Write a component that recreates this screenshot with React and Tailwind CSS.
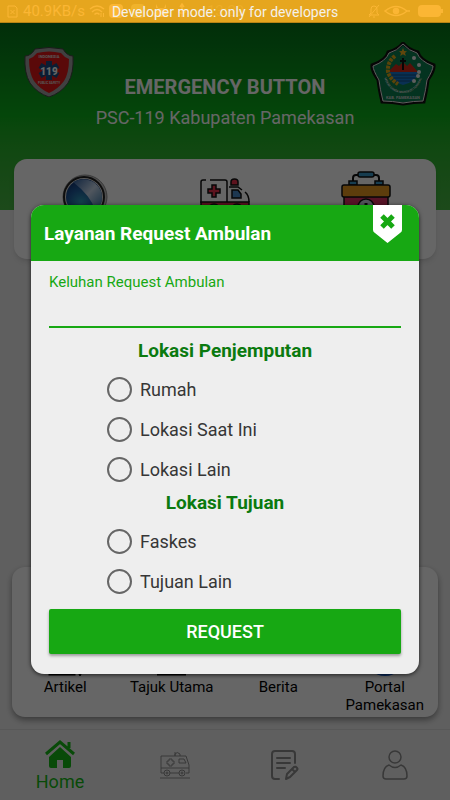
const ShieldLogo = () => (
  <svg viewBox="0 0 50 50" className="w-[50px] h-[50px]">
    <path
      d="M1 9Q7 9 11 2Q25 -1 39 2Q43 9 49 9Q50 26 44 36Q37 46 25 50Q13 46 6 36Q0 26 1 9Z"
      fill="#a0a0a0"
      stroke="#444"
      strokeWidth="1"
    />
    <path
      d="M5 12Q10 10 13 6Q25 3 37 6Q40 10 45 12Q45 26 40 34Q34 42 25 46Q16 42 10 34Q5 26 5 12Z"
      fill="#e01818"
    />
    <g stroke="#1d4a80" strokeWidth="6">
      <path d="M25 14V33M16 18.500L34 28.500M34 18.500L16 28.500" />
    </g>
    <text x="25" y="28" textAnchor="middle" fontSize="10" fontWeight="900" fill="#fff">119</text>
    <text x="25" y="11" textAnchor="middle" fontSize="4" fontWeight="700" fill="#ddd">INDONESIA</text>
    <text x="25" y="37" textAnchor="middle" fontSize="3" fontWeight="700" fill="#ddd">PUBLIC SAFETY</text>
  </svg>
);

const CityEmblem = () => (
  <svg viewBox="0 0 66 64" className="w-[66px] h-16">
    <path
      d="M33 1Q39 8 48 10Q50 18 64 23Q65 28 58 38Q57 47 54 60Q44 60 33 62Q22 60 12 60Q9 47 8 38Q1 28 2 23Q16 18 18 10Q27 8 33 1Z"
      fill="#0c8050"
      stroke="#111"
      strokeWidth="3"
    />
    <path
      d="M33 2Q39 9 47 11Q50 19 63 24Q63 28 57 38Q56 47 53 59Q44 59 33 61Q22 59 13 59Q10 47 9 38Q3 28 3 24Q16 19 19 11Q27 9 33 2Z"
      fill="none"
      stroke="#eee"
      strokeWidth="1"
    />
    <path d="M33 6L34.200 9L37 9.200L35 11L35.800 14L33 12.300L30.200 14L31 11L29 9.200L31.800 9Z" fill="#f0b020" />
    <path d="M18 30L26 22L29 24L33 20L37 24L40 21L48 30Z" fill="#d82a18" />
    <path d="M19 30H48Q46 40 33 43Q21 40 19 30Z" fill="#1878d0" />
    <path d="M20 33H47M22 36H45M25 39H41" stroke="#104a80" strokeWidth="1" />
    <path d="M33 16V28M30 19H36" stroke="#111" strokeWidth="2" />
    <path d="M25 14Q17 20 18 30Q20 37 28 42" fill="none" stroke="#e0a818" strokeWidth="4" strokeDasharray="3 1" />
    <g fill="#eee">
      <circle cx="44" cy="16" r="2" />
      <circle cx="49" cy="23" r="2" />
      <circle cx="49" cy="30" r="2" />
      <circle cx="48" cy="34" r="2" />
      <circle cx="44" cy="39" r="2" />
    </g>
    <path id="motto" d="M12 27Q16 51 33 51Q50 51 54 27" fill="none" />
    <text fontSize="3" fontWeight="700" fill="#ddd">
      <textPath href="#motto" startOffset="50%" textAnchor="middle">
        MEKAR GANDA MANGESTI TUNGGAL
      </textPath>
    </text>
    <text x="33" y="57" textAnchor="middle" fontSize="4" fontWeight="700" fill="#ccc">KAB. PAMEKASAN</text>
  </svg>
);

const Magnifier = () => (
  <svg viewBox="0 0 50 50" className="w-[50px] h-[50px]">
    <defs>
      <radialGradient id="lens" cx="42%" cy="65%" r="60%">
        <stop offset="0" stopColor="#2f9db8" />
        <stop offset="0.600" stopColor="#1e5a9c" />
        <stop offset="1" stopColor="#143878" />
      </radialGradient>
      <linearGradient id="shine" x1="0" y1="0" x2="1" y2="1">
        <stop offset="0" stopColor="#2c5c9c" />
        <stop offset="0.500" stopColor="#c8d8ec" />
        <stop offset="1" stopColor="#3070a0" />
      </linearGradient>
    </defs>
    <circle cx="26" cy="26" r="22" fill="#c0c0c0" stroke="#909090" strokeWidth="1" />
    <circle cx="25" cy="26" r="20" fill="#ddd" stroke="#222" strokeWidth="2" />
    <circle cx="25" cy="26" r="18" fill="url(#lens)" />
    <path d="M14 11Q25 5 36 12Q44 19 43 29Q42 35 36 39Q32 25 14 11Z" fill="url(#shine)" />
  </svg>
);

const Ambulance = () => (
  <svg viewBox="0 0 50 44" className="w-[50px] h-11" fill="none" stroke="#111" strokeWidth="1.500">
    <path d="M1 26V5Q1 3 3 3H6M10 3H25Q27 3 27 5V26" />
    <path d="M29 10H38L42 13M45 15Q49 18 49 25" />
    <path d="M1 25H49V39H1Z" fill="#d82c48" />
    <path d="M12 8H16V12H20V16H16V20H12V16H8V12H12Z" fill="#e8304c" />
    <path d="M32 13H38L41 17V21H32Z" fill="#4a8ac8" />
    <path d="M31 8V5Q31 2 34.500 2Q38 2 38 5V8Z" fill="#e8304c" />
    <circle cx="14" cy="33" r="6" fill="#555" />
    <circle cx="37" cy="33" r="6" fill="#555" />
  </svg>
);

const MedicalKit = () => (
  <svg viewBox="0 0 50 50" className="w-[50px] h-[50px]" stroke="#111" strokeWidth="1.500">
    <path d="M12 12V7Q12 4 15 4H35Q38 4 38 7V12" fill="none" strokeWidth="2" />
    <rect x="17" y="1" width="16" height="5" rx="2" fill="#3a9ac8" />
    <rect x="8" y="10" width="8" height="4" fill="#3a9ac8" />
    <rect x="34" y="10" width="8" height="4" fill="#3a9ac8" />
    <path d="M3 25H47V48H3Z" fill="#d83060" />
    <rect x="1" y="14" width="48" height="12" rx="2" fill="#e89a20" />
    <circle cx="25" cy="36" r="8" fill="#c8d0e0" />
    <path d="M25 32V40M21 36H29" strokeWidth="3" />
  </svg>
);

const services = [
  { name: "Pencarian", Icon: Magnifier },
  { name: "Ambulan", Icon: Ambulance },
  { name: "P3K", Icon: MedicalKit },
];

const ArtikelIcon = () => (
  <svg viewBox="0 0 40 40" className="size-10" fill="none" stroke="#000" strokeWidth="3">
    <path d="M5 2H29V38H5Z" />
    <path d="M35 6V34L33 35L35 39L37 35L35 34" strokeWidth="2" />
  </svg>
);

const TajukIcon = () => (
  <svg viewBox="0 0 40 40" className="size-10" fill="none" stroke="#000" strokeWidth="3">
    <path d="M5 38H34M7 4H32V36H7Z" />
  </svg>
);

const BeritaIcon = () => (
  <svg viewBox="0 0 40 40" className="size-10" fill="none" stroke="#000" strokeWidth="2">
    <path d="M4 4H36V32H4Z" />
  </svg>
);

const PortalIcon = () => (
  <svg viewBox="0 0 40 40" className="size-10">
    <circle cx="20" cy="20" r="20" fill="#0f5fe0" />
  </svg>
);

const infoLinks = [
  { label: "Artikel", Icon: ArtikelIcon },
  { label: "Tajuk Utama", Icon: TajukIcon },
  { label: "Berita", Icon: BeritaIcon },
  { label: "Portal Pamekasan", Icon: PortalIcon },
];

const StatusBar = () => (
  <div className="relative z-20 h-[23px] bg-[#e6a61e] border-b border-[#b98416] flex items-center px-[7px] gap-1 text-[#fbb634]">
    <svg viewBox="0 0 11 13" className="w-[11px] h-[13px]" fill="none" stroke="currentColor" strokeWidth="1">
      <path d="M1 1H8L10 3V12H1ZM3.500 5L7.500 9M7.500 5L3.500 9" />
    </svg>
    <span className="text-[15px] leading-5 ml-px">40.9KB/s</span>
    <svg viewBox="0 0 16 14" className="w-4 h-3.5" fill="none" stroke="currentColor" strokeWidth="1.500">
      <path d="M1 5Q8 -1 15 5M3 8Q8 3 13 8M5.500 10.500Q8 8 10.500 10.500" />
      <path d="M12 9V13M14.500 9V13" strokeWidth="1" />
    </svg>
    <span className="size-3.5 rounded-sm bg-current" />
    <span className="size-3.5 rounded-sm bg-[#f0b32c] ml-1" />
    <svg viewBox="0 0 16 14" className="w-4 h-3.5 ml-1" fill="currentColor">
      <path d="M1 13Q1 4 8 4Q15 4 15 13ZM3 0L5 4H3ZM13 0L11 4H13Z" />
    </svg>
    <svg viewBox="0 0 10 16" className="w-2.5 h-4 ml-1" fill="none" stroke="currentColor" strokeWidth="1.500">
      <path d="M5 2V14M2 6V9L5 11L8 9V6M3 4L5 1L7 4" />
    </svg>
    <span className="text-[15px] leading-5 ml-4 text-[#edad27]">13:29</span>
    <svg viewBox="0 0 12 14" className="w-3 h-3.5 ml-auto" fill="none" stroke="currentColor" strokeWidth="1">
      <path d="M1 11H11L9 9V5Q9 2 6 2Q3 2 3 5V9ZM5 13H7M11 1L1 13" />
    </svg>
    <svg viewBox="0 0 26 12" className="w-[26px] h-3" fill="none" stroke="currentColor" strokeWidth="1.500">
      <path d="M1 6Q12 -3 23 6Q12 15 1 6ZM23 6H26" />
      <circle cx="12" cy="6" r="2.500" fill="currentColor" />
    </svg>
    <span className="flex items-center ml-1">
      <span className="w-[23px] h-3 rounded-sm bg-current" />
      <span className="w-0.5 h-1 bg-current" />
    </span>
    <p className="absolute inset-0 flex items-center justify-center text-[14px] text-[#f4f1ea] pt-0.5">
      Developer mode: only for developers
    </p>
  </div>
);

const RadioRow = ({ group, label }) => (
  <label className="flex items-center gap-2 h-10 text-[18px] text-[#363636]">
    <input
      type="radio"
      name={group}
      value={label}
      className="appearance-none size-[25px] rounded-full border-2 border-[#666] checked:bg-[#17a813] shrink-0"
    />
    {label}
  </label>
);

const RequestDialog = () => (
  <div className="absolute inset-0 z-10 bg-black/60 flex flex-col justify-center px-[31px] pt-[79px]">
    <form
      role="dialog"
      aria-label="Layanan Request Ambulan"
      className="bg-[#eee] rounded-[13px] overflow-hidden shadow-[0_1px_4px_rgba(0,0,0,0.7)]">
      <div className="h-14 bg-[#17a813] flex items-center justify-between pl-[13px] pr-[17px]">
        <h2 className="text-[19px] leading-7 pt-px font-bold text-white">Layanan Request Ambulan</h2>
        <button type="button" aria-label="Tutup" className="self-start">
          <svg viewBox="0 0 29 38" className="w-[29px] h-[38px]">
            <path d="M0 0H29V25Q29 27 27 28L14.500 38L2 28Q0 27 0 25Z" fill="#fff" />
            <path d="M9 11L20 22M20 11L9 22" stroke="#17a813" strokeWidth="5" />
          </svg>
        </button>
      </div>

      <div className="px-[18px] pt-[11px] pb-5 flex flex-col">
        <label htmlFor="keluhan" className="text-[15px] leading-5 text-[#17a813]">
          Keluhan Request Ambulan
        </label>
        <input
          id="keluhan"
          type="text"
          className="h-9 border-b-2 border-[#17a813] bg-transparent outline-none text-[18px]"
        />

        <h3 className="mt-[9px] h-7 text-center text-[19px] leading-7 font-bold text-[#0b7a0f]">
          Lokasi Penjemputan
        </h3>
        <div className="mt-1 pl-[58px]">
          <RadioRow group="penjemputan" label="Rumah" />
          <RadioRow group="penjemputan" label="Lokasi Saat Ini" />
          <RadioRow group="penjemputan" label="Lokasi Lain" />
        </div>

        <h3 className="h-7 text-center text-[19px] leading-7 font-bold text-[#0b7a0f]">
          Lokasi Tujuan
        </h3>
        <div className="mt-1 pl-[58px]">
          <RadioRow group="tujuan" label="Faskes" />
          <RadioRow group="tujuan" label="Tujuan Lain" />
        </div>

        <button
          type="submit"
          className="mt-2 h-[45px] rounded-xs bg-[#17a813] text-white text-[18px] font-medium shadow-[0_2px_3px_rgba(0,0,0,0.35)]">
          REQUEST
        </button>
      </div>
    </form>
  </div>
);

const BottomNav = () => (
  <nav className="mt-3 h-[71px] bg-[#eee] border-t border-[#dcdcdc] flex text-[#8c8c8c]">
    <a href="#home" className="flex-[12] flex flex-col items-center pt-2.5 text-[#14b914]">
      <svg viewBox="0 0 30 28" className="w-[30px] h-7" fill="currentColor">
        <path d="M15 7L26 17V26Q26 28 24 28H18V20H12V28H6Q4 28 4 26V17Z" />
        <path d="M1 14L15 2L29 14M24 2V8" fill="none" stroke="currentColor" strokeWidth="3" />
      </svg>
      <span className="text-[18px] leading-7">Home</span>
    </a>
    <a href="#ambulan" aria-label="Ambulan" className="flex-[11] flex items-center justify-center">
      <svg viewBox="0 0 30 28" className="w-[30px] h-7" fill="none" stroke="currentColor" strokeWidth="1">
        <path d="M4 22H1V5H26L29 14V22H26M10 22H19M1 17H29M0 27H30M15 5V1M15 5V3Q17 0 20 3V5M19 8H24L26 12H19Z" />
        <path d="M9 8H12V10H14V13H12V15H9V13H7V10H9Z" />
        <circle cx="7" cy="22" r="3" />
        <circle cx="22" cy="22" r="3" />
        <circle cx="7" cy="22" r="1" />
        <circle cx="22" cy="22" r="1" />
      </svg>
    </a>
    <a href="#riwayat" aria-label="Riwayat" className="flex-[11] flex items-center justify-center">
      <svg viewBox="0 0 28 30" className="w-7 h-[30px]" fill="none" stroke="currentColor" strokeWidth="2" strokeLinecap="round" strokeLinejoin="round">
        <path d="M8 29H4Q1 29 1 26V4Q1 1 4 1H21Q24 1 24 4V13M6 8H19M6 13H19M6 18H14" />
        <path d="M15 29L16 24L23 17Q25 16 26 18Q27 19 26 20L19 27ZM21 19L24 22" />
      </svg>
    </a>
    <a href="#profil" aria-label="Profil" className="flex-[11] flex items-center justify-center">
      <svg viewBox="0 0 26 30" className="w-[26px] h-[30px]" fill="none" stroke="currentColor" strokeWidth="1.500">
        <circle cx="13" cy="7" r="6" />
        <path d="M7 15Q13 20 19 15Q25 17 25 26Q25 29 22 29H4Q1 29 1 26Q1 17 7 15Z" />
      </svg>
    </a>
  </nav>
);

const App = () => {
  return (
    <div className="relative min-h-screen flex flex-col bg-[#eee] font-[Roboto,sans-serif]">
      <StatusBar />

      <header className="h-[187px] bg-linear-to-b from-[#067418] via-[#0cb01a] to-[#48b844] flex items-start px-3.5 pt-[19px] text-white">
        <div className="w-[66px] pt-[5px] pl-1 flex justify-center">
          <ShieldLogo />
        </div>
        <div className="flex-1 text-center pt-[31px]">
          <h1 className="text-[20px] leading-7 font-bold">EMERGENCY BUTTON</h1>
          <p className="text-[18px] leading-[34px]">PSC-119 Kabupaten Pamekasan</p>
        </div>
        <CityEmblem />
      </header>

      <section className="-mt-[51px] mx-3.5 h-[100px] rounded-[13px] bg-white shadow-md grid grid-cols-3 justify-items-center pt-3">
        {services.map(({ name, Icon }) => (
          <button key={name} type="button" aria-label={name} className="h-[50px] flex items-end">
            <Icon />
          </button>
        ))}
      </section>

      <section className="mt-auto mx-3 h-[150px] rounded-[13px] bg-white shadow-[0_3px_6px_rgba(0,0,0,0.4)] grid grid-cols-4 pt-[69px]">
        {infoLinks.map(({ label, Icon }) => (
          <a key={label} href="#info" className="flex flex-col items-center gap-0.5 px-2 text-center text-[15px] leading-[18px] text-black">
            <Icon />
            {label}
          </a>
        ))}
      </section>

      <BottomNav />
      <RequestDialog />
    </div>
  );
};

export default App;
